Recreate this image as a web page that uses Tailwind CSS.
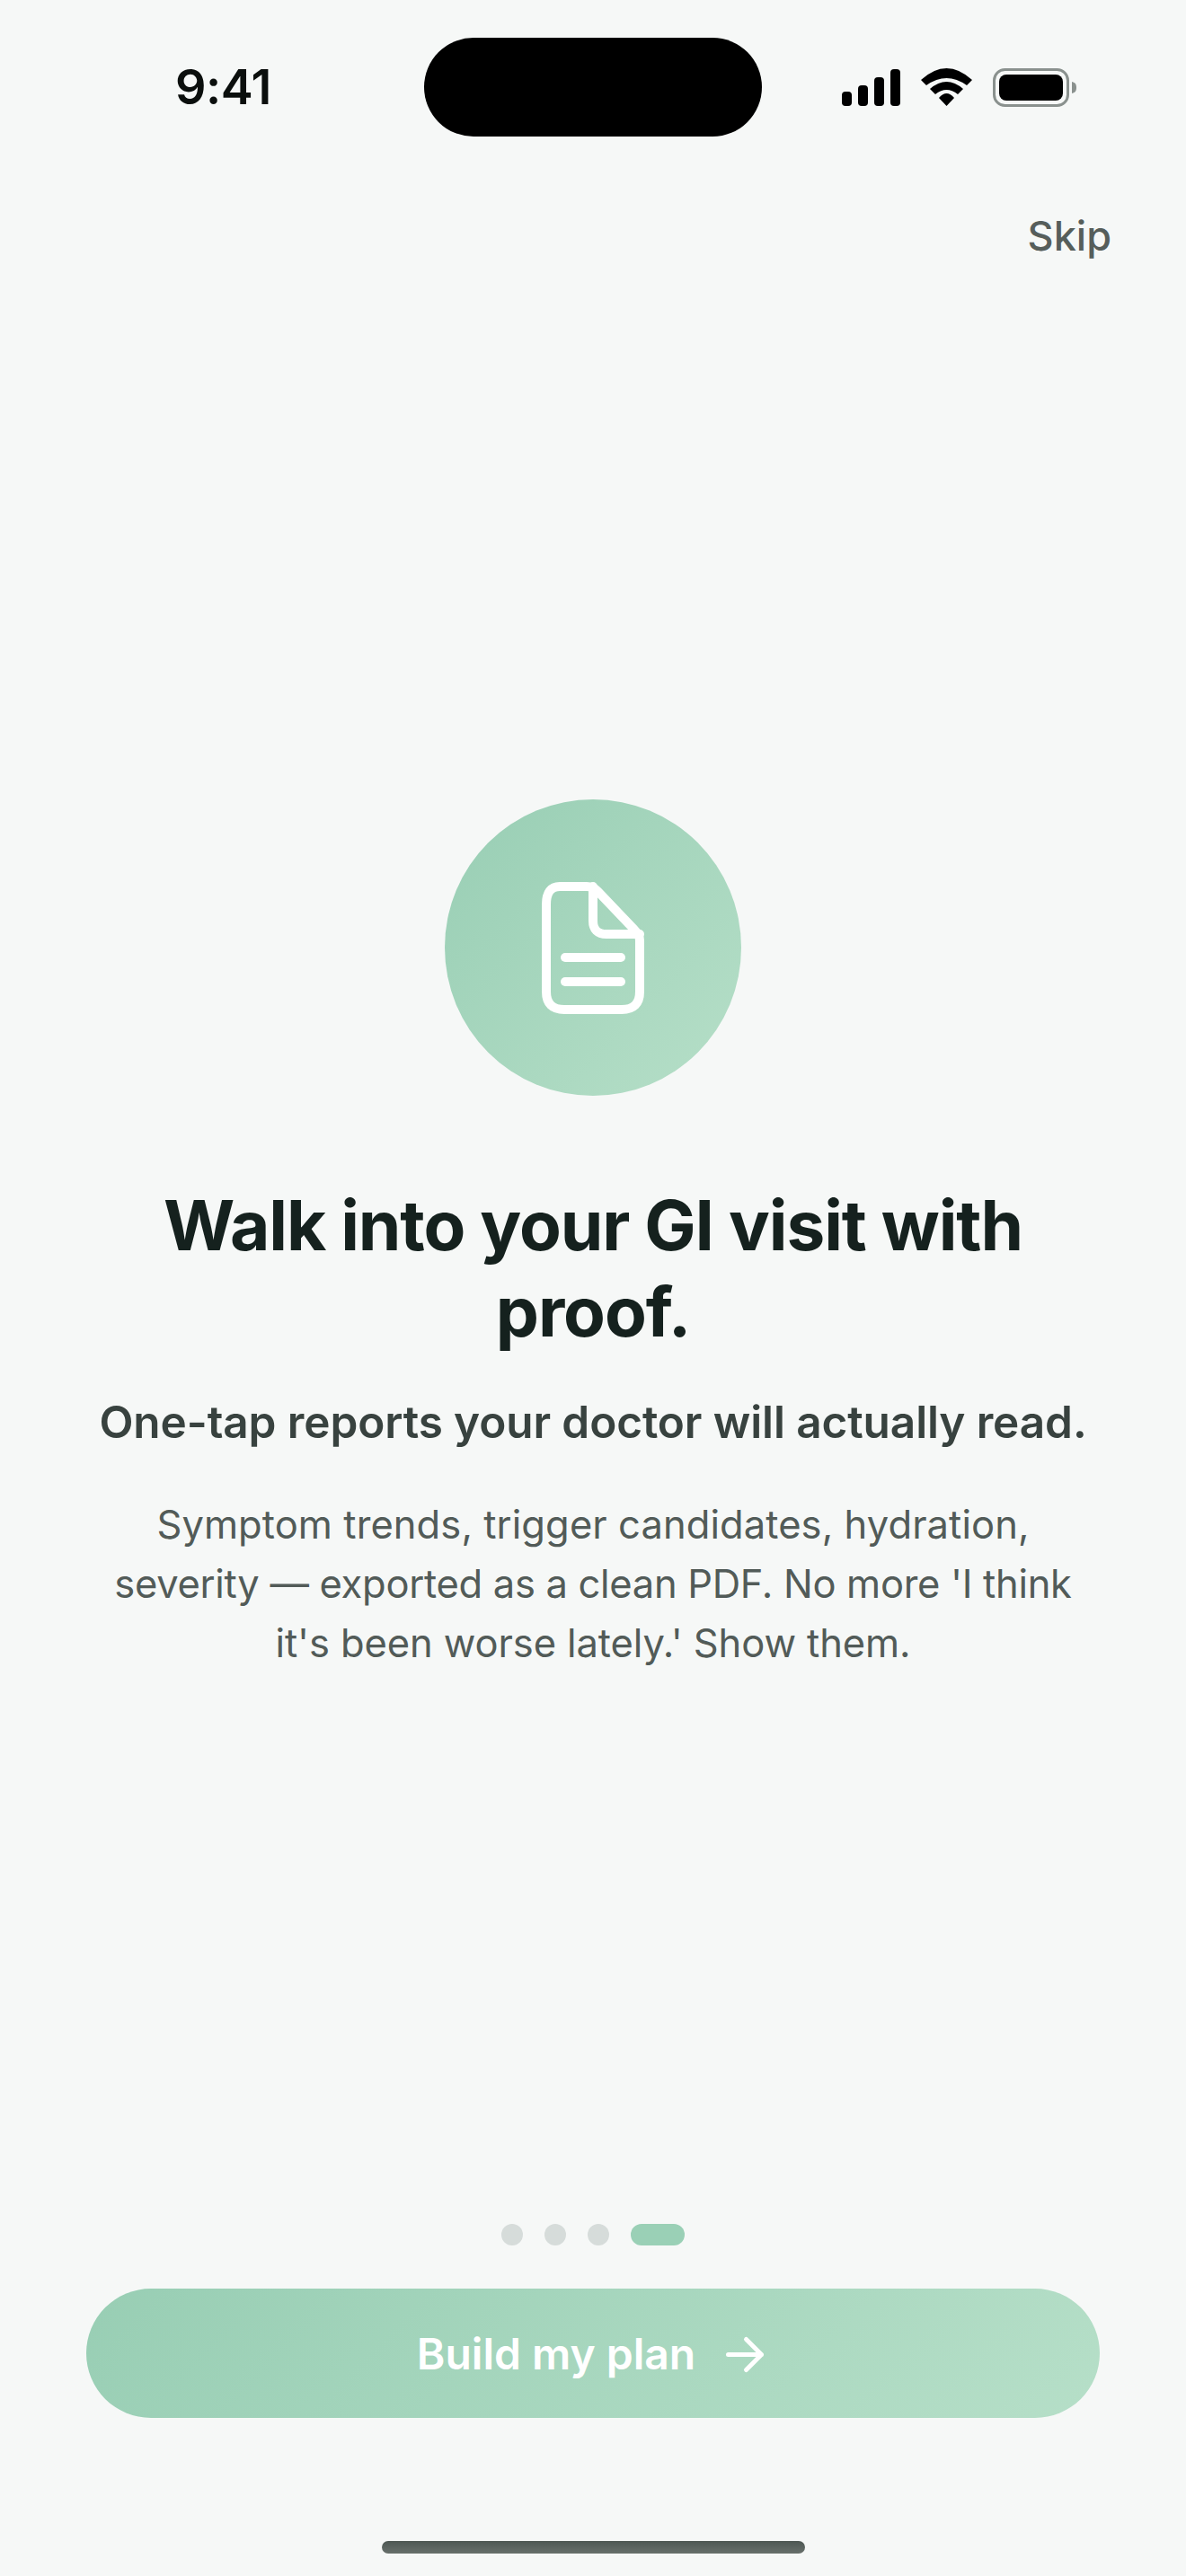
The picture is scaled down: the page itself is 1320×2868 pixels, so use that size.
<!DOCTYPE html>
<html lang="en">

<head>
    <meta charset="UTF-8">
    <meta name="viewport" content="width=device-width,initial-scale=1.0">
    <script src="https://cdn.jsdelivr.net/npm/@tailwindcss/browser@4"></script>
    <title>Onboarding - Reports</title>
</head>

<body class="bg-[#f6f8f7] font-['Inter',sans-serif]">
    <div class="relative flex flex-col w-[1320px] h-[2868px] overflow-hidden">
        <!-- Status bar -->
        <div class="relative flex items-center justify-between h-[110px] mt-[42px] pl-[195px] pr-[122px]">
            <span class="text-[54px] leading-none font-semibold tracking-[-0.5px] text-[#0b0f0d]">9:41</span>
            <div class="absolute left-[472px] top-0 w-[376px] h-[110px] rounded-[55px] bg-black"></div>
            <div class="flex items-center gap-[23px]">
                <svg width="65" height="41" viewBox="0 0 65 41" fill="black">
                    <rect x="0" y="25" width="11" height="16" rx="4"/>
                    <rect x="18" y="18" width="11" height="23" rx="4"/>
                    <rect x="36" y="9" width="11" height="32" rx="4"/>
                    <rect x="54" y="0" width="11" height="41" rx="4"/>
                </svg>
                <svg width="57" height="42" viewBox="0 0 57 42" fill="black">
                    <path d="M0 13 Q28.5 -13 57 13 L51 19 Q28.5 3 6 19 Z"/>
                    <path d="M10 23 Q28.5 7 47 23 L41 29 Q28.5 19 16 29 Z"/>
                    <path d="M20 33 Q28.5 23 37 33 L28.5 42 Z"/>
                </svg>
                <svg width="93" height="43" viewBox="0 0 93 43">
                    <rect x="1.5" y="1.5" width="82" height="40" rx="12" fill="none" stroke="#8a918e" stroke-width="3"/>
                    <rect x="7" y="7" width="71" height="29" rx="8" fill="black"/>
                    <path d="M88 15 C92 16 93 18 93 21.5 C93 25 92 27 88 28 Z" fill="#8a918e"/>
                </svg>
            </div>
        </div>

        <!-- Skip -->
        <div class="flex justify-end mt-[81px] pr-[83px]">
            <span class="text-[45px] leading-[60px] font-medium text-[#565e5b]">Skip</span>
        </div>

        <!-- Content -->
        <div class="flex flex-col items-center mt-[597px] px-[96px] text-center">
            <div class="flex items-center justify-center w-[330px] h-[330px] rounded-full bg-gradient-to-br from-[#98ceb4] to-[#b6dfc8]">
                <svg width="114" height="147" viewBox="603 980 114 147" fill="none" stroke="white" stroke-width="10" stroke-linecap="round" stroke-linejoin="round">
                    <path d="M623 985 H653 Q660 985 665 990 L706 1033 Q712 1039 712 1045 V1102 Q712 1122 692 1122 H628 Q608 1122 608 1102 V1005 Q608 985 623 985 Z"/>
                    <path d="M660 985 V1023 Q660 1038 675 1038 H712"/>
                    <path d="M629 1064 H691"/>
                    <path d="M629 1091 H691"/>
                </svg>
            </div>
            <h1 class="mt-[96px] w-[1128px] text-[76.5px] leading-[96px] font-bold tracking-[-1.1px] text-[#15211e]">Walk into your GI visit with proof.</h1>
            <p class="mt-[42px] text-[49.5px] leading-[66px] font-semibold tracking-[-0.1px] whitespace-nowrap text-[#38423f]">One-tap reports your doctor will actually read.</p>
            <p class="mt-[48px] w-[1128px] text-[43.5px] leading-[66px] whitespace-nowrap text-[#525b58]">
                <span class="block tracking-[0.08px]">Symptom trends, trigger candidates, hydration,</span>
                <span class="block tracking-[-0.3px]">severity — exported as a clean PDF. No more 'I think</span>
                <span class="block tracking-[-0.1px]">it's been worse lately.' Show them.</span>
            </p>
        </div>

        <!-- Bottom -->
        <div class="flex flex-col items-center mt-auto px-[96px]">
            <div class="flex items-center gap-[24px]">
                <span class="w-[24px] h-[24px] rounded-full bg-[#d6dcda]"></span>
                <span class="w-[24px] h-[24px] rounded-full bg-[#d6dcda]"></span>
                <span class="w-[24px] h-[24px] rounded-full bg-[#d6dcda]"></span>
                <span class="w-[60px] h-[24px] rounded-full bg-[#9ad0b6]"></span>
            </div>
            <div class="flex items-center justify-center gap-[28px] w-full h-[144px] mt-[48px] rounded-full bg-[linear-gradient(135deg,#98ceb4,#b6dfc8)]">
                <span class="pt-[2px] text-[48px] font-semibold text-white">Build my plan</span>
                <svg width="54" height="54" viewBox="0 0 54 54" fill="none" stroke="white" stroke-width="5" stroke-linecap="round" stroke-linejoin="round">
                    <path d="M8.5 28.5 H45.5 M28.5 11.5 L45.5 28.5 L28.5 45.5"/>
                </svg>
            </div>
            <div class="w-[471px] h-[14px] mt-[137px] mb-[25px] rounded-full bg-gradient-to-b from-[#4d5753] to-[#68706c]"></div>
        </div>
    </div>
</body>

</html>
